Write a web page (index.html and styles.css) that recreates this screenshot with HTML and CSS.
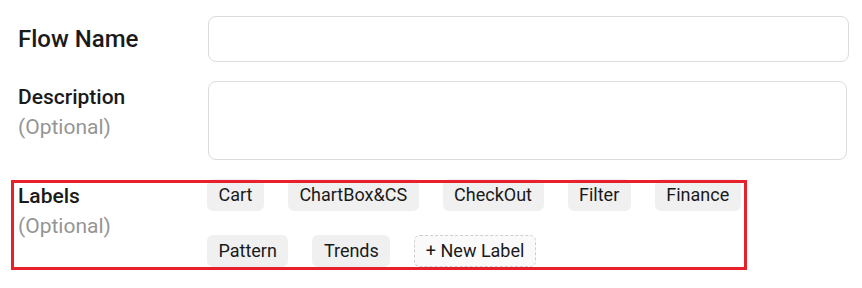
FILE: index.html
```html
<!DOCTYPE html>
<html lang="en">
<head>
    <meta charset="UTF-8">
    <meta name="viewport" content="width=device-width, initial-scale=1.0">
    <title>Flow Settings</title>
    <link rel="stylesheet" href="styles.css">
</head>
<body>

    <form class="flow-form">
        <div class="field field-name">
            <label class="field-label" for="flow_name">Flow Name</label>
            <input type="text" id="flow_name" class="text-input">
        </div>

        <div class="field field-desc">
            <label class="field-label" for="flow_desc">
                Description
                <span class="optional">(Optional)</span>
            </label>
            <textarea id="flow_desc" class="text-area"></textarea>
        </div>

        <!-- highlighted row -->
        <div class="field field-labels">
            <div class="field-label">
                Labels
                <span class="optional">(Optional)</span>
            </div>
            <div class="chips">
                <span class="chip">Cart</span>
                <span class="chip">ChartBox&amp;CS</span>
                <span class="chip">CheckOut</span>
                <span class="chip">Filter</span>
                <span class="chip">Finance</span>
                <span class="chip">Pattern</span>
                <span class="chip">Trends</span>
                <button type="button" class="chip chip-new">+ New Label</button>
            </div>
        </div>
    </form>

</body>
</html>
```

FILE: styles.css
```css
body { margin: 0; background: #fff; font-family: Roboto, "Liberation Sans", Arial, sans-serif; color: #1a1a1a; }

.flow-form { padding: 16px 0 20px 14px; }

.field { display: flex; align-items: flex-start; }
.field-label {
    width: 190px;
    padding-left: 4px;
    font-size: 21px;
    font-weight: 500;
    line-height: 30px;
}
.optional { display: block; font-weight: 400; color: #959595; }

.field-name { margin-bottom: 19px; }
.field-name .field-label { font-size: 24px; line-height: 46px; }
.field-desc { margin-bottom: 19px; }
.field-desc .field-label { margin-top: 1px; }

.text-input, .text-area {
    box-sizing: border-box;
    border: 1px solid #dcdcdc;
    border-radius: 8px;
    background: #fff;
    font: inherit;
    padding: 8px 12px;
}
.text-input { width: 641px; height: 46px; }
.text-area { display: block; width: 639px; height: 79px; resize: none; }

.field-labels { position: relative; width: 730px; height: 88px; }
.field-labels::after {
    content: "";
    position: absolute;
    top: 1px; left: -3px; right: -3px; bottom: -3px;
    border: 3px solid #e8202a;
    pointer-events: none;
}
.field-labels .field-label { padding-top: 2px; }

.chips { display: flex; flex-wrap: wrap; gap: 24px; width: 540px; }
.chip {
    display: inline-block;
    box-sizing: border-box;
    height: 32px;
    line-height: 32px;
    padding: 0 11.5px;
    border-radius: 6px;
    background: #f0f0f0;
    font-size: 18px;
    color: #1a1a1a;
}
.chip-new {
    line-height: 30px;
    padding: 0 10.5px;
    border: 1px dashed #cfcfcf;
    background: #fafafa;
    font-family: inherit;
    cursor: pointer;
}
```
